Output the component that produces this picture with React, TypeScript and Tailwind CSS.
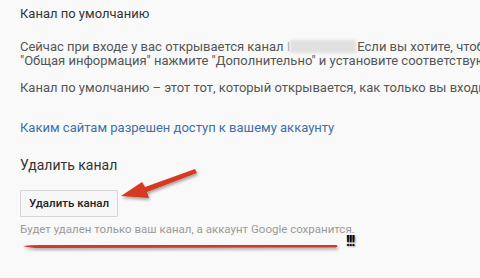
import React from "react";

export default function App() {
  return (
    <div className="relative w-[480px] h-[278px] overflow-hidden bg-[#f9f9f9] font-['Roboto',sans-serif] text-[#444]">
      <div className="pl-[20px] pt-[6px] whitespace-nowrap">
        {/* Default channel */}
        <h2 className="text-[13px] leading-[16px] text-[#333]">Канал по умолчанию</h2>

        <div className="mt-[18px] text-[13px] leading-[13.5px] text-[#555]">
          <p>
            Сейчас при входе у вас открывается канал{" "}
            <span className="text-[#aaa]">І</span>
            <span className="inline-block align-middle w-[66px] h-[13px] -mt-[2px] mr-[1px] bg-[#e0e0e0] blur-[1.5px]" />
            Если вы хотите, чтобы по умолчанию открывался другой канал, на странице
          </p>
          <p>"Общая информация" нажмите "Дополнительно" и установите соответствующий флажок.</p>
          <p className="mt-[14px]">Канал по умолчанию – этот тот, который открывается, как только вы входите в аккаунт.</p>
        </div>

        <a className="block mt-[26px] text-[13px] leading-[13.5px] text-[#3e6fa8]">
          Каким сайтам разрешен доступ к вашему аккаунту
        </a>

        {/* Delete channel */}
        <h2 className="mt-[22px] text-[14px] leading-[18px] text-[#333]">Удалить канал</h2>

        <button className="mt-[16px] w-[98px] h-[27px] border border-[#d6d6d6] bg-[#f7f7f7] text-[11.5px] font-medium text-[#222] rounded-[1px]">
          Удалить канал
        </button>

        <p className="mt-[5px] text-[11.5px] leading-[14px] text-[#999]">
          Будет удален только ваш канал, а аккаунт Google сохранится.
        </p>
      </div>

      {/* Annotations */}
      <svg className="absolute left-0 top-0" width="480" height="278">
        <defs>
          <filter id="sh" x="-10%" y="-50%" width="120%" height="300%">
            <feDropShadow dx="1" dy="2" stdDeviation="1.5" floodColor="#000" floodOpacity="0.35" />
          </filter>
        </defs>
        <polygon
          points="121,196 142,182 145,187 195,169 197,173 147,192 149,198"
          fill="#d63b24"
          filter="url(#sh)"
        />
        <path d="M23,246 Q30,245 40,245 L336,245 Q339,246 336,247.5 L40,248 Q30,248 23,246 Z" fill="#d3382a" filter="url(#sh)" />
      </svg>
      <span className="absolute left-[346px] top-[234px] text-[14px] leading-none font-bold text-black tracking-[-1px] [text-shadow:1px_1px_2px_rgba(0,0,0,0.4)]">
        !!!
      </span>
    </div>
  );
}
